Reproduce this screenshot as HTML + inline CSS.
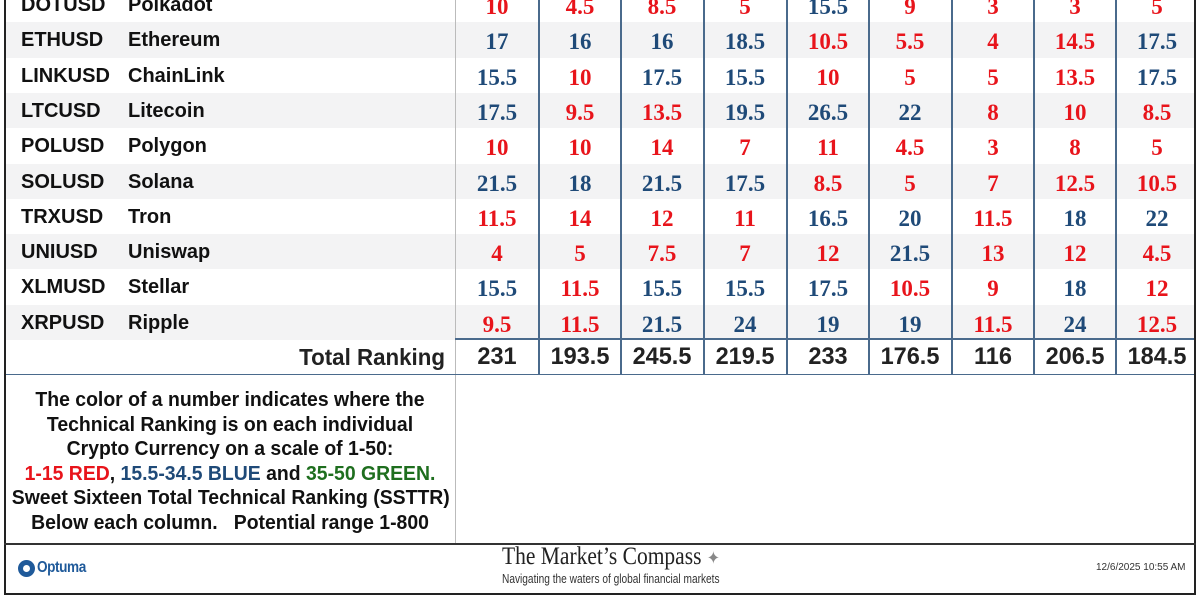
<!DOCTYPE html>
<html><head><meta charset="utf-8"><style>
*{margin:0;padding:0;box-sizing:border-box}
body{width:1200px;height:600px;background:#fff;position:relative;overflow:hidden;font-family:"Liberation Sans",Arial,sans-serif}
.a{position:absolute}
.row{position:absolute;left:6px;width:1189px;height:35.3px}
.g{background:#f3f3f4}
.sym{position:absolute;left:15px;font-weight:bold;font-size:20px;color:#111;line-height:37px}
.nm{position:absolute;left:122px;font-weight:bold;font-size:20px;color:#111;line-height:37px}
.n{position:absolute;width:82px;text-align:center;font-family:"Liberation Serif",serif;font-weight:bold;font-size:23px;line-height:37px}
.r{color:#e8141b}.b{color:#1f4a78}
.vl{position:absolute;top:0;width:1.5px;background:#4a6a8c;height:375px}
.t{position:absolute;width:82px;text-align:center;font-weight:bold;font-size:24px;color:#222;line-height:36px;top:339px;transform:scaleX(0.98)}
.lg{position:absolute;left:5px;width:450px;text-align:center;font-weight:bold;font-size:20px;line-height:24.5px;color:#111;transform:scaleX(0.97);white-space:nowrap}
</style></head><body>
<div id="rows"></div>
<script>
var d=[["DOTUSD","Polkadot","10 4.5 8.5 5 15.5 9 3 3 5"],["ETHUSD","Ethereum","17 16 16 18.5 10.5 5.5 4 14.5 17.5"],["LINKUSD","ChainLink","15.5 10 17.5 15.5 10 5 5 13.5 17.5"],["LTCUSD","Litecoin","17.5 9.5 13.5 19.5 26.5 22 8 10 8.5"],["POLUSD","Polygon","10 10 14 7 11 4.5 3 8 5"],["SOLUSD","Solana","21.5 18 21.5 17.5 8.5 5 7 12.5 10.5"],["TRXUSD","Tron","11.5 14 12 11 16.5 20 11.5 18 22"],["UNIUSD","Uniswap","4 5 7.5 7 12 21.5 13 12 4.5"],["XLMUSD","Stellar","15.5 11.5 15.5 15.5 17.5 10.5 9 18 12"],["XRPUSD","Ripple","9.5 11.5 21.5 24 19 19 11.5 24 12.5"]];
var xs=[455,538,620,703,786,868,951,1033,1115,1195],h="";
d.forEach(function(r,i){var y=-13+i*35.3;h+='<div class="row'+(i%2?' g':'')+'" style="top:'+y+'px"><span class="sym">'+r[0]+'</span><span class="nm">'+r[1]+'</span></div>';
r[2].split(" ").forEach(function(v,j){var f=parseFloat(v);h+='<div class="n '+(f<=15?'r':'b')+'" style="left:'+(xs[j]+1)+'px;top:'+(y+1)+'px">'+v+'</div>';});});
for(var j=1;j<9;j++)h+='<div class="vl" style="left:'+xs[j]+'px"></div>';
h+='<div class="vl" style="left:455px;height:543px;background:#bbb;width:1px"></div>';
"231 193.5 245.5 219.5 233 176.5 116 206.5 184.5".split(" ").forEach(function(v,j){h+='<div class="t" style="left:'+(xs[j]+1)+'px">'+v+'</div>';});
document.getElementById("rows").innerHTML=h;
</script>
<div class="a" style="left:455px;top:338px;width:740px;height:2px;background:#4a6a8c"></div>
<div class="a" style="left:5px;top:373.5px;width:1190px;height:1.5px;background:#4a6a8c"></div>
<div class="a" style="left:145px;top:339px;width:300px;text-align:right;font-weight:bold;font-size:23px;color:#222;line-height:36px;transform:scaleX(0.97);transform-origin:right center">Total Ranking</div>
<div class="lg" style="top:388px">The color of a number indicates where the</div>
<div class="lg" style="top:412.5px">Technical Ranking is on each individual</div>
<div class="lg" style="top:437px">Crypto Currency on a scale of 1-50:</div>
<div class="lg" style="top:461.5px"><span style="color:#e8141b">1-15 RED</span>, <span style="color:#1f4a78">15.5-34.5 BLUE</span> and <span style="color:#1e6e1e">35-50 GREEN.</span></div>
<div class="lg" style="top:486px">Sweet Sixteen Total Technical Ranking (SSTTR)</div>
<div class="lg" style="top:510.5px">Below each column.&nbsp;&nbsp; Potential range 1-800</div>
<div class="a" style="left:0;top:0;width:6px;height:594px;border-right:2px solid #222"></div>
<div class="a" style="left:1194px;top:0;width:2px;height:594px;background:#222"></div>
<div class="a" style="left:4px;top:542.5px;width:1192px;height:2px;background:#333"></div>
<div class="a" style="left:4px;top:592.5px;width:1192px;height:2px;background:#222"></div>
<div class="a" style="left:18px;top:560px;width:17px;height:17px;border-radius:50%;background:#1f5a9a"></div>
<div class="a" style="left:23px;top:565px;width:7px;height:7px;border-radius:50%;background:#fff"></div>
<div class="a" style="left:37px;top:559px;font-size:16px;font-weight:bold;color:#1f5a9a;letter-spacing:-0.5px;transform:scaleX(0.85);transform-origin:left">Optuma</div>
<div class="a" style="left:502px;top:543px;font-family:'Liberation Serif',serif;font-size:25px;color:#222;transform:scaleX(0.86);transform-origin:left;white-space:nowrap">The Market’s Compass <span style="color:#888;font-size:18px">✦</span></div>
<div class="a" style="left:502px;top:571px;font-size:13px;color:#333;transform:scaleX(0.78);transform-origin:left;white-space:nowrap">Navigating the waters of global financial markets</div>
<div class="a" style="left:1096px;top:562px;font-size:10px;color:#333">12/6/2025 10:55 AM</div>
</body></html>
